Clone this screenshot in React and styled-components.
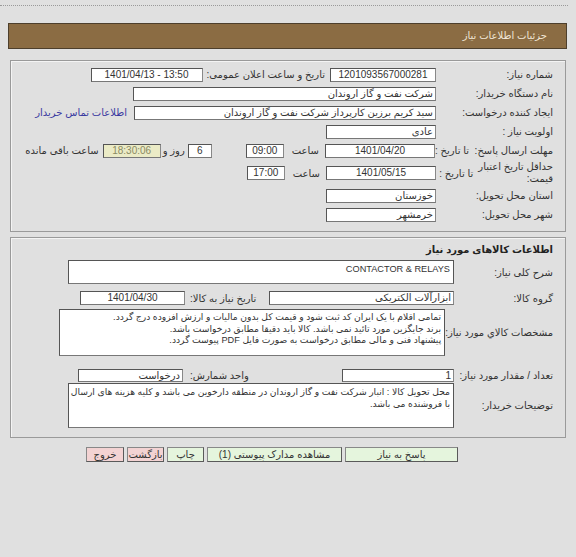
import React from 'react';
import styled, { createGlobalStyle } from 'styled-components';

const GlobalStyle = createGlobalStyle`
  html, body {
    margin: 0;
    padding: 0;
    background: #e0e0e0;
  }
  body {
    font-family: "Liberation Sans", "DejaVu Sans", sans-serif;
    font-size: 10px;
    color: #333;
  }
`;

const Page = styled.div`
  direction: rtl;
  padding: 0 9px 20px 8px;
`;

const DottedRule = styled.div`
  margin: 5px -1px 0 -8px;
  border-top: 1px dotted #9a9a9a;
`;

const Header = styled.div`
  margin-top: 17px;
  height: 24px;
  line-height: 24px;
  background: #8b6c43;
  border: 1px solid #4d3f2c;
  color: #efe6d6;
  padding-right: 19px;
  font-size: 10px;
`;

const Section = styled.div`
  margin: ${p => p.$mt}px 1px 0 2px;
  border: 1px solid #9a9a9a;
  box-shadow: inset 1px 1px 0 #f4f4f4;
  padding: ${p => p.$pt}px 12px ${p => p.$pb}px 0;
`;

const Row = styled.div`
  display: flex;
  align-items: center;
  min-height: ${p => p.$h || 19}px;
  margin-top: ${p => p.$mt || 0}px;
`;

const Label = styled.div`
  flex: 0 0 ${p => p.$w}px;
  display: flex;
  align-items: center;
  white-space: nowrap;
`;

const WrapLabel = styled.div`
  flex: 0 0 auto;
  white-space: nowrap;
  line-height: 12px;
`;

const Field = styled.div`
  box-sizing: border-box;
  flex: 0 0 ${p => p.$w}px;
  height: ${p => p.$h || 14}px;
  line-height: ${p => (p.$h || 14) - 2}px;
  background: ${p => (p.$timer ? '#ebebc6' : '#fff')};
  color: ${p => (p.$timer ? '#8a8a62' : '#333')};
  border: 1px solid #555;
  border-bottom-color: #777;
  border-right-color: #888;
  direction: ${p => (p.$center ? 'ltr' : 'rtl')};
  text-align: ${p => (p.$center ? 'center' : 'right')};
  padding: 0 2px;
  white-space: nowrap;
  overflow: hidden;
  font-size: 10px;
`;

const TextBox = styled.div`
  box-sizing: border-box;
  flex: 0 0 386px;
  height: ${p => p.$h}px;
  background: #fff;
  border: 1px solid #555;
  border-bottom-color: #777;
  padding: ${p => p.$pt || 2}px 3px 0 3px;
  line-height: 11.5px;
  text-align: right;
  white-space: nowrap;
  overflow: hidden;
  font-size: 9.2px;
`;

const Text = styled.span`
  white-space: nowrap;
  margin: 0 ${p => p.$mr || 0}px 0 ${p => p.$ml || 0}px;
`;

const Gap = styled.div`
  flex: 0 0 ${p => p.$w}px;
`;

const Content = styled.div`
  display: flex;
  align-items: center;
  width: 386px;
`;

const PushLeft = styled.span`
  white-space: nowrap;
  margin-right: auto;
  margin-left: ${p => p.$ml}px;
`;

const Link = styled.a`
  color: #3a3aa0;
  text-decoration: none;
  white-space: nowrap;
  margin-right: 7px;
`;

const Title = styled.div`
  font-weight: bold;
  font-size: 10px;
  line-height: 16px;
  color: #222;
`;

const ButtonBar = styled.div`
  display: flex;
  gap: 3px;
  margin-top: 9px;
  padding-right: 109px;
`;

const Button = styled.button`
  box-sizing: border-box;
  width: ${p => p.$w}px;
  height: 15px;
  padding: 0;
  font-family: inherit;
  font-size: 10px;
  color: #333;
  background: ${p => (p.$red ? '#f3d3d3' : '#e5f5dd')};
  border: 1px solid #5a5a5a;
  border-top-color: #888;
  border-left-color: #888;
  line-height: 13px;
  cursor: pointer;
`;

export default function App() {
  return (
    <>
      <GlobalStyle />
      <Page>
        <DottedRule />
        <Header>جزئیات اطلاعات نیاز</Header>

        <Section $mt={11} $pt={4} $pb={7}>
          <Row>
            <Label $w={117}>شماره نیاز:</Label>
            <Field $w={106} $center>1201093567000281</Field>
            <Text $mr={5} $ml={4}>تاریخ و ساعت اعلان عمومی:</Text>
            <Field $w={112} $center>1401/04/13 - 13:50</Field>
          </Row>
          <Row>
            <Label $w={117}>نام دستگاه خریدار:</Label>
            <Field $w={303}>شرکت نفت و گاز اروندان</Field>
          </Row>
          <Row>
            <Label $w={117}>ایجاد کننده درخواست:</Label>
            <Field $w={302}>سید کریم برزین کارپرداز شرکت نفت و گاز اروندان</Field>
            <Link href="#">اطلاعات تماس خریدار</Link>
          </Row>
          <Row>
            <Label $w={117}>اولویت نیاز :</Label>
            <Field $w={110}>عادی</Field>
          </Row>
          <Row>
            <Label $w={117}>مهلت ارسال پاسخ:&nbsp; تا تاریخ :</Label>
            <Field $w={110} $center>1401/04/20</Field>
            <Text $mr={6} $ml={8}>ساعت</Text>
            <Field $w={38} $center>09:00</Field>
            <Gap $w={34} />
            <Field $w={24} $center>6</Field>
            <Text $mr={3} $ml={2}>روز و</Text>
            <Field $w={58} $center $timer>18:30:06</Field>
            <Text $mr={4}>ساعت باقی مانده</Text>
          </Row>
          <Row $h={26}>
            <Label $w={117}>
              <WrapLabel>
                حداقل تاریخ اعتبار
                <br />
                قیمت:
              </WrapLabel>
              <Text $mr={5}>تا تاریخ :</Text>
            </Label>
            <Field $w={110} $center>1401/05/15</Field>
            <Text $mr={6} $ml={8}>ساعت</Text>
            <Field $w={38} $center>17:00</Field>
          </Row>
          <Row>
            <Label $w={117}>استان محل تحویل:</Label>
            <Field $w={110}>خوزستان</Field>
          </Row>
          <Row>
            <Label $w={117}>شهر محل تحویل:</Label>
            <Field $w={110}>خرمشهر</Field>
          </Row>
        </Section>

        <Section $mt={5} $pt={4} $pb={9}>
          <Title>اطلاعات کالاهای مورد نیاز</Title>
          <Row $mt={2} $h={24}>
            <Label $w={99}>شرح کلی نیاز:</Label>
            <TextBox $h={24} $pt={3}>CONTACTOR &amp; RELAYS</TextBox>
          </Row>
          <Row $mt={7} $h={14}>
            <Label $w={99}>گروه کالا:</Label>
            <Content>
              <Field $w={185}>ابزارآلات الکتریکی</Field>
              <PushLeft $ml={5}>تاریخ نیاز به کالا:</PushLeft>
              <Field $w={105} $center>1401/04/30</Field>
              <Gap $w={12} />
            </Content>
          </Row>
          <Row $mt={4} $h={47}>
            <Label $w={99}>مشخصات کالاي مورد نیاز:</Label>
            <TextBox $h={47}>
              تمامی اقلام با یک ایران کد ثبت شود و قیمت کل بدون مالیات و ارزش افزوده درج گردد.
              <br />
              برند جایگزین مورد تائید نمی باشد. کالا باید دقیقا مطابق درخواست باشد.
              <br />
              پیشنهاد فنی و مالی مطابق درخواست به صورت فایل PDF پیوست گردد.
            </TextBox>
          </Row>
          <Row $mt={13} $h={13}>
            <Label $w={99}>تعداد / مقدار مورد نیاز:</Label>
            <Content>
              <Field $w={112} $h={13}>1</Field>
              <PushLeft $ml={7}>واحد شمارش:</PushLeft>
              <Field $w={105} $h={13}>درخواست</Field>
              <Gap $w={10} />
            </Content>
          </Row>
          <Row $mt={1} $h={45}>
            <Label $w={99}>توضیحات خریدار:</Label>
            <TextBox $h={45} $pt={3}>
              محل تحویل کالا : انبار شرکت نفت و گاز اروندان در منطقه دارخوین می باشد و کلیه هزینه های ارسال
              <br />
              با فروشنده می باشد.
            </TextBox>
          </Row>
        </Section>

        <ButtonBar>
          <Button $w={113}>پاسخ به نیاز</Button>
          <Button $w={135}>مشاهده مدارک پیوستی (1)</Button>
          <Button $w={37}>چاپ</Button>
          <Button $w={37} $red>بازگشت</Button>
          <Button $w={38} $red>خروج</Button>
        </ButtonBar>
      </Page>
    </>
  );
}
